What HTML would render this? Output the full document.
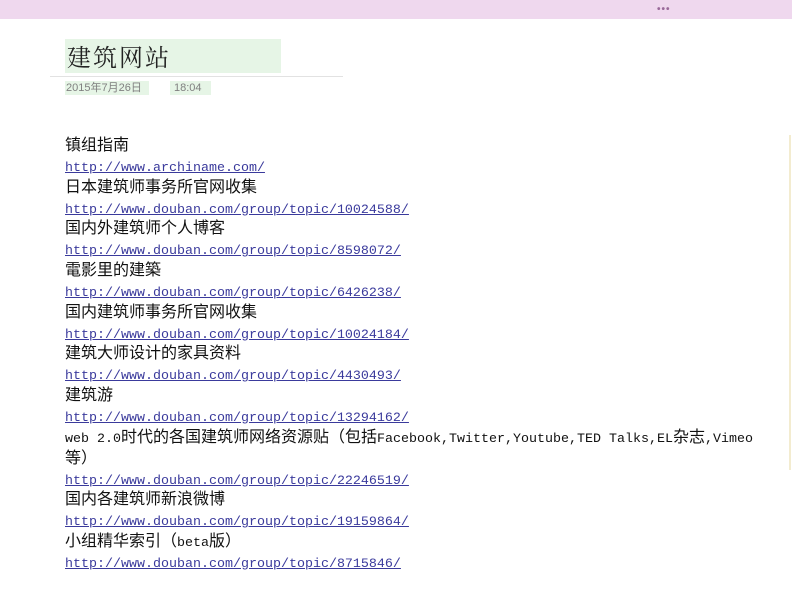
<!DOCTYPE html>
<html><head><meta charset="utf-8"><style>
html,body{margin:0;padding:0;background:#fff;width:792px;height:600px;overflow:hidden;position:relative}
.bar{position:absolute;left:0;top:0;width:792px;height:19px;background:#efd8ee}
.dots{position:absolute;left:657px;top:4px;font:bold 10px "Liberation Sans",sans-serif;color:#9a6a9a;letter-spacing:1px}
.title{position:absolute;left:65px;top:39px;width:216px;height:34px;background:#e6f5e6;font:24px "Noto Serif CJK SC","Liberation Serif",serif;line-height:34px;color:#222;padding-left:2px;box-sizing:border-box;letter-spacing:2px}
.rule{position:absolute;left:50px;top:76px;width:293px;height:1px;background:#e2e2e2}
.date{position:absolute;top:81px;height:14px;background:#e6f5e6;font:11px "Liberation Sans","Noto Sans CJK SC",sans-serif;color:#808080;line-height:14px}
.side{position:absolute;left:789px;top:135px;width:2px;height:335px;background:#f3ecd0}
.content{position:absolute;left:65px;top:136px;width:715px;line-height:20.85px;font-size:16px;font-family:"Liberation Sans","Noto Sans CJK SC",sans-serif;color:#111}
.content div{white-space:nowrap;height:20.85px}
.content a{font-family:"Liberation Mono","Noto Sans CJK SC",monospace;font-size:13.33px;color:#3a3a9c;text-decoration:underline}
.m{font-family:"Liberation Mono","Noto Sans CJK SC",monospace;font-size:13.33px}
</style></head><body>
<div class="bar"></div><div class="dots">•••</div>
<div class="title">建筑网站</div>
<div class="rule"></div>
<div class="date" style="left:65px;width:83px;padding-left:1px">2015年7月26日</div>
<div class="date" style="left:170px;width:37px;padding-left:4px">18:04</div>
<div class="side"></div>
<div class="content">
<div>镇组指南</div>
<div><a>http://www.archiname.com/</a></div>
<div>日本建筑师事务所官网收集</div>
<div><a>http://www.douban.com/group/topic/10024588/</a></div>
<div>国内外建筑师个人博客</div>
<div><a>http://www.douban.com/group/topic/8598072/</a></div>
<div>電影里的建築</div>
<div><a>http://www.douban.com/group/topic/6426238/</a></div>
<div>国内建筑师事务所官网收集</div>
<div><a>http://www.douban.com/group/topic/10024184/</a></div>
<div>建筑大师设计的家具资料</div>
<div><a>http://www.douban.com/group/topic/4430493/</a></div>
<div>建筑游</div>
<div><a>http://www.douban.com/group/topic/13294162/</a></div>
<div><span class="m">web 2.0</span>时代的各国建筑师网络资源贴（包括<span class="m">Facebook,Twitter,Youtube,TED Talks,EL</span>杂志<span class="m">,Vimeo</span></div>
<div>等）</div>
<div><a>http://www.douban.com/group/topic/22246519/</a></div>
<div>国内各建筑师新浪微博</div>
<div><a>http://www.douban.com/group/topic/19159864/</a></div>
<div>小组精华索引（<span class="m">beta</span>版）</div>
<div><a>http://www.douban.com/group/topic/8715846/</a></div>
</div>
</body></html>
